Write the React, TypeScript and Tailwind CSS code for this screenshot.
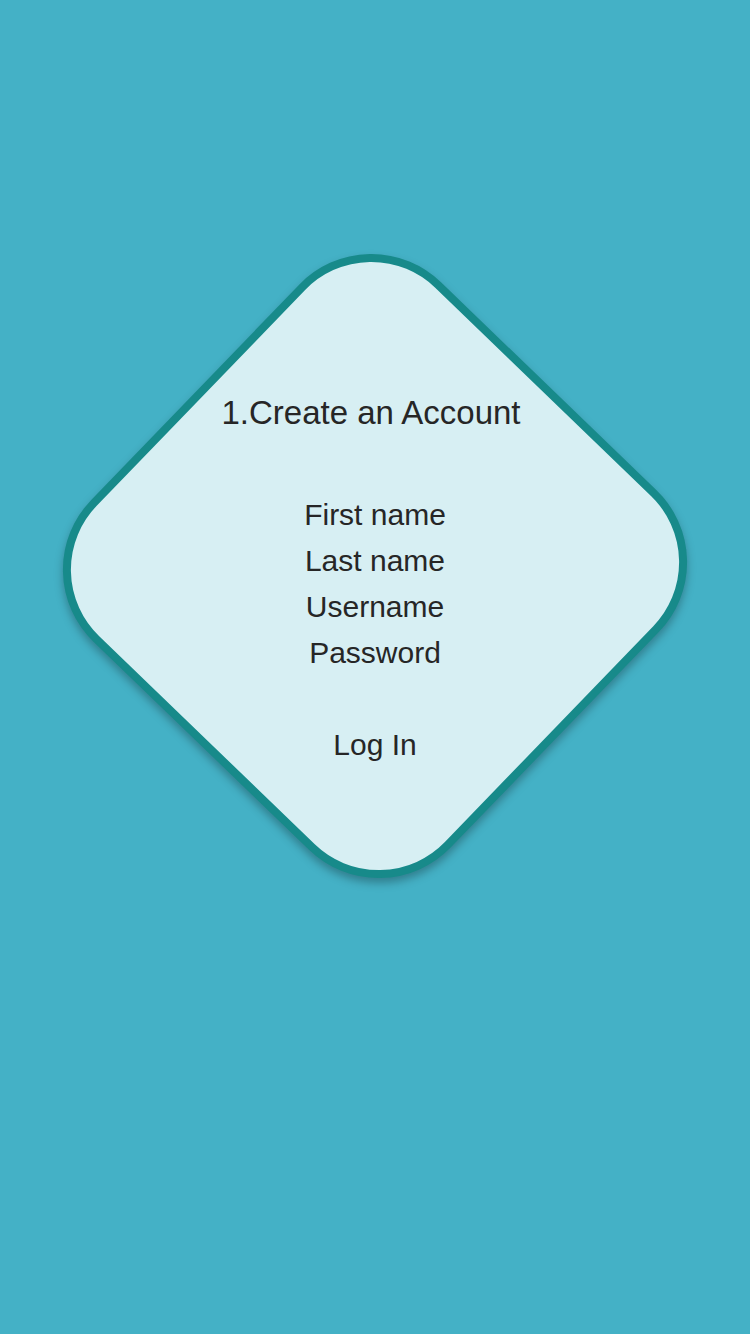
import React from 'react';

const fields = ['First name', 'Last name', 'Username', 'Password'];

export default function App(): React.ReactElement {
    return (
        <div className="min-h-[1334px] w-full bg-[#44b1c6] flex justify-center pt-[316px] font-['Liberation_Sans',Arial,sans-serif] text-[#262626]">
            <div className="grid w-[500px] h-[500px]">
                <div className="col-start-1 row-start-1 drop-shadow-[0_5px_4px_rgba(0,0,0,0.28)]">
                    <div className="w-[500px] h-[500px] rotate-[44deg] rounded-[100px] border-[8px] border-[#178a8a] bg-[#d7eff3]" />
                </div>

                {/* relative so it paints above the transformed shape */}
                <div className="relative col-start-1 row-start-1 self-start flex flex-col items-center pt-[77px]">
                    <h1 className="text-[33px] leading-[40px] font-normal m-0 pr-[8px]">
                        <span>1.</span>
                        <span>Create an Account</span>
                    </h1>

                    <ul className="mt-[59px] flex flex-col items-center text-[30px] leading-[46px]">
                        {fields.map((field) => (
                            <li key={field}>{field}</li>
                        ))}
                    </ul>

                    <button className="mt-[46px] text-[30px] leading-[46px] bg-transparent border-none cursor-pointer">
                        Log In
                    </button>
                </div>
            </div>
        </div>
    );
}
